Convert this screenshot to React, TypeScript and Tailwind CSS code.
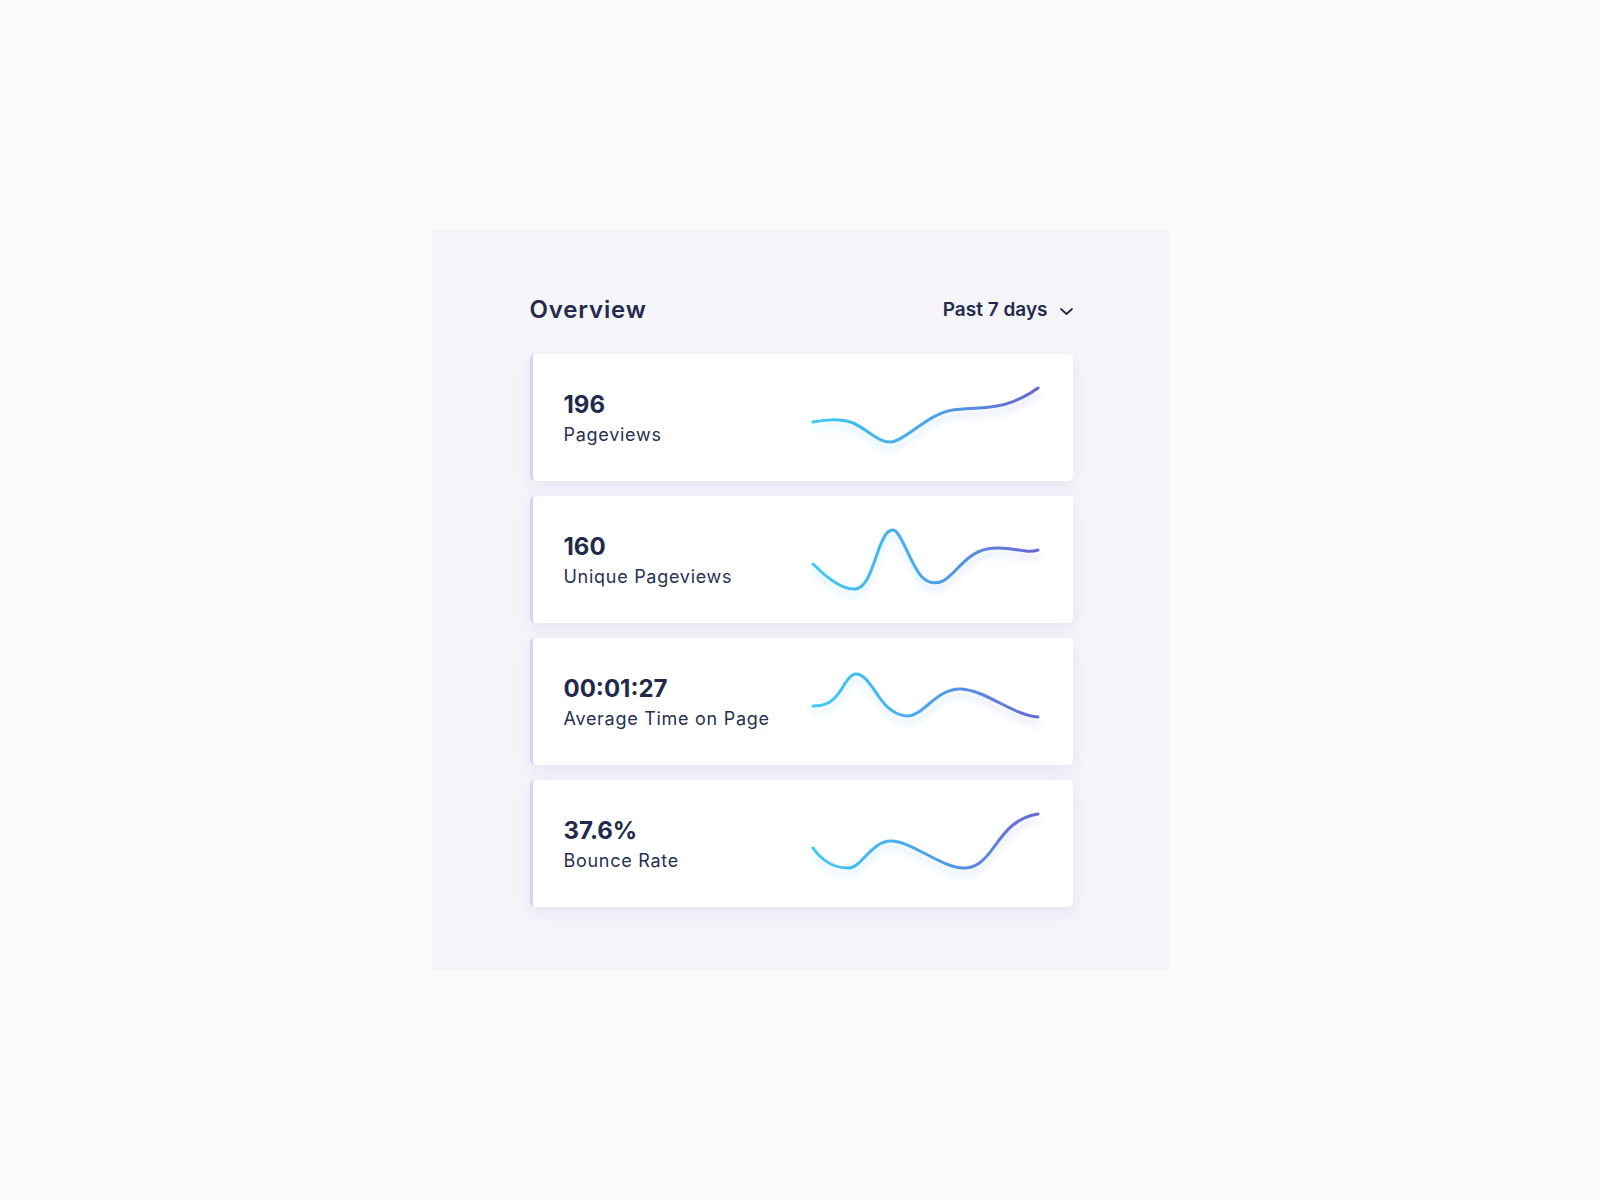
const stats = [
  {
    value: "196",
    label: "Pageviews",
    path: "M12,58 C24,56 38,54 52,59 C66,65 78,79 90,78 C104,77 128,49 152,46 C166,44 180,45 196,42 C212,39 226,32 237,24",
  },
  {
    value: "160",
    label: "Unique Pageviews",
    path: "M12,58 C24,70 40,84 54,83 C67,82 72,58 79,40 C84,28 87,24 92,24 C100,24 110,60 121,71 C128,78 135,78 142,75 C155,68 165,47 186,43 C202,40 214,44 225,45 C231,46 234,45 237,44",
  },
  {
    value: "00:01:27",
    label: "Average Time on Page",
    path: "M12,58 C25,58 32,54 40,42 C46,32 50,26 55,26 C62,26 68,34 76,46 C85,60 95,68 107,68 C122,68 136,40 160,41 C184,42 214,68 237,69",
  },
  {
    value: "37.6%",
    label: "Bounce Rate",
    path: "M12,58 C22,72 35,78 47,78 C61,78 70,51 90,51 C111,51 140,78 163,78 C175,78 183,71 193,57 C205,40 216,27 237,24",
  },
];

const Sparkline = ({ d, id }: { d: string; id: number }) => (
  <svg width="250" height="127" viewBox="0 -10 250 127" className="flex-none">
    <defs>
      <linearGradient id={`line-${id}`} gradientUnits="userSpaceOnUse" x1="12" y1="0" x2="237" y2="0">
        <stop offset="0" stopColor="#3dcaf7" />
        <stop offset="0.5" stopColor="#4ba6ea" />
        <stop offset="1" stopColor="#6867d2" />
      </linearGradient>
      <filter id={`glow-${id}`} x="-10%" y="-40%" width="120%" height="200%">
        <feGaussianBlur in="SourceGraphic" stdDeviation="3.5" result="blur" />
        <feOffset in="blur" dy="6" result="off" />
        <feComponentTransfer in="off" result="soft">
          <feFuncA type="linear" slope="0.26" />
        </feComponentTransfer>
        <feMerge>
          <feMergeNode in="soft" />
          <feMergeNode in="SourceGraphic" />
        </feMerge>
      </filter>
    </defs>
    <path
      d={d}
      fill="none"
      stroke={`url(#line-${id})`}
      strokeWidth="3"
      strokeLinecap="round"
      filter={`url(#glow-${id})`}
    />
  </svg>
);

const StatCard = ({ value, label, path, index }: { value: string; label: string; path: string; index: number }) => (
  <article className="h-[127px] flex items-center justify-between bg-white rounded-[5px] border-l-[3px] border-[#d3d6f2] shadow-[0_6px_16px_rgba(90,100,180,0.09)]">
    <div className="pl-[31px] pt-[2px]">
      <h4 className="text-[24px] leading-[28px] font-bold text-[#222a4b]">{value}</h4>
      <p className="mt-[4px] text-[18px] leading-[24px] tracking-[0.04em] text-[#283052]">{label}</p>
    </div>
    <div className="mr-[22px]">
      <Sparkline d={path} id={index} />
    </div>
  </article>
);

const App = () => {
  return (
    <div className="min-h-screen bg-[#fafafa] flex items-center justify-center font-['Inter',sans-serif]">
      <section className="w-[737px] h-[740px] bg-[#f4f4f9] pt-[64px] pl-[98px] pr-[96px]">
        {/* Header */}
        <div className="h-[32px] flex items-center justify-between mb-[28px]">
          <h2 className="text-[24px] leading-[32px] font-semibold tracking-[0.035em] text-[#232b4c]">Overview</h2>
          <button className="flex items-center gap-[12px] text-[19px] leading-[32px] font-semibold text-[#232b4c]">
            Past 7 days
            <svg width="13" height="7" viewBox="0 0 13 7" className="mt-[3px]">
              <path d="M1,1 L6.5,6 L12,1" fill="none" stroke="#232b4c" strokeWidth="1.8" strokeLinecap="round" strokeLinejoin="round" />
            </svg>
          </button>
        </div>

        {/* Cards */}
        <div className="flex flex-col gap-[15px]">
          {stats.map((s, i) => (
            <StatCard key={s.label} value={s.value} label={s.label} path={s.path} index={i} />
          ))}
        </div>
      </section>
    </div>
  );
};

export default App;
